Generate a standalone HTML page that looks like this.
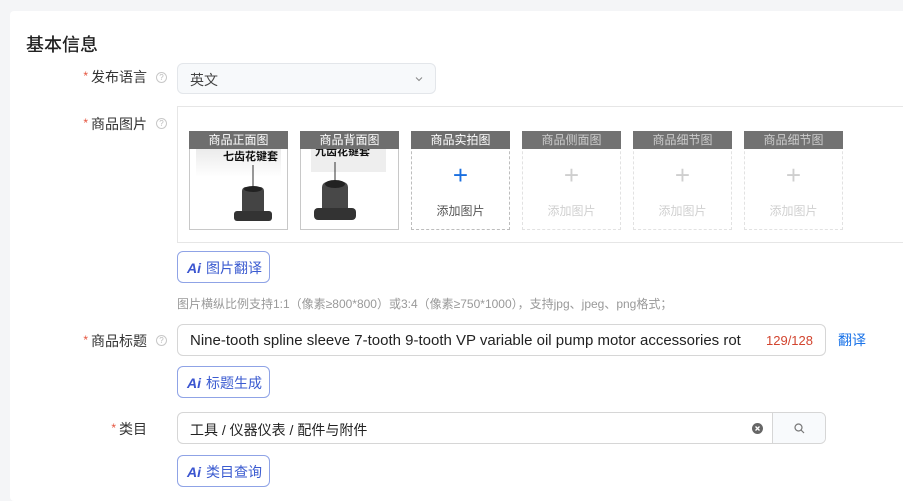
<!DOCTYPE html>
<html><head><meta charset="utf-8"><style>
*{box-sizing:border-box;margin:0;padding:0}
body{width:903px;height:492px;background:#f4f5f7;font-family:"Liberation Sans","Noto Sans CJK SC",sans-serif;position:relative;overflow:hidden;color:#333}
.card{position:absolute;left:10px;top:11px;width:900px;height:490px;background:#fff;border-radius:4px}
.abs{position:absolute}
.h{left:26px;top:31px;font-size:18px;color:#222;font-weight:500}
.lab{font-size:14px;color:#333;text-align:right;width:70px}
.lab b{color:#e5533d;font-weight:normal;font-size:12px;margin-right:3px;position:relative;top:-2px}
.q{width:11px;height:11px;border:1px solid #c8c8c8;border-radius:50%;font-size:8px;color:#bbb;text-align:center;line-height:9px}
.sel{left:177px;top:63px;width:259px;height:31px;border:1px solid #e3e6ea;border-radius:6px;background:#f7f9fb;font-size:14px;padding:6px 12px;color:#444}
.imgbox{left:177px;top:106px;width:740px;height:137px;border:1px solid #e6e6e6}
.tile{top:131px;width:99px;height:99px;border:1px dashed #bdbdbd}
.tile.p{border:1px solid #c8c8c8}
.tile.d{border-color:#e2e2e2}
.th{position:absolute;left:-1px;top:-1px;width:99px;height:18px;background:#6e6e6e;color:#fff;font-size:12px;text-align:center;line-height:18px;z-index:2}
.tile.d .th{background:#727272;color:#ccc}
.plus{position:absolute;left:0;width:100%;top:30px;text-align:center;font-size:26px;color:#1a6fe0;line-height:26px;font-weight:300}
.tile.d .plus{color:#cfcfcf}
.at{position:absolute;left:0;width:100%;top:70px;text-align:center;font-size:12px;color:#555}
.tile.d .at{color:#d0d0d0}
.ai{left:177px;width:93px;height:32px;border:1px solid #8fa3e6;border-radius:6px;font-size:14px;color:#3b5bd0;padding:6px 0 0 9px;background:#fff}
.ai i{font-style:italic;font-weight:bold;color:#3b55d0;margin-right:5px}
.hint{left:177px;top:295px;font-size:12px;color:#999}
.inp{left:177px;width:649px;height:32px;border:1px solid #d6d6d6;border-radius:6px;font-size:15px;padding:6px 12px;color:#222;white-space:nowrap;overflow:hidden}
</style></head><body>
<div class="card"></div>
<div class="abs h">基本信息</div>

<div class="abs lab" style="left:77px;top:67px"><b>*</b>发布语言</div>
<div class="abs q" style="left:156px;top:72px">?</div>
<div class="abs sel">英文<svg style="position:absolute;right:12px;top:12px" width="8" height="6"><path d="M1 1.5L4 4.5L7 1.5" fill="none" stroke="#888" stroke-width="1"/></svg></div>

<div class="abs lab" style="left:77px;top:114px"><b>*</b>商品图片</div>
<div class="abs q" style="left:156px;top:118px">?</div>
<div class="abs imgbox"></div>

<div class="abs tile p" style="left:189px"><div class="th">商品正面图</div>
<svg width="97" height="97" style="position:absolute;left:0;top:0"><defs><linearGradient id="g" x1="0" y1="0" x2="0" y2="1"><stop offset="0" stop-color="#e6e6e6"/><stop offset="1" stop-color="#fff"/></linearGradient></defs><rect x="6" y="10" width="85" height="35" fill="url(#g)"/><text x="33" y="28" font-size="11" font-weight="bold" fill="#111" font-family="Noto Sans CJK SC">七齿花键套</text><line x1="63" y1="33" x2="63" y2="58" stroke="#333"/><rect x="52" y="55" width="22" height="30" rx="4" fill="#444"/><ellipse cx="63" cy="57" rx="9" ry="3" fill="#222"/><rect x="44" y="79" width="38" height="10" rx="3" fill="#333"/></svg></div>
<div class="abs tile p" style="left:300px"><div class="th">商品背面图</div>
<svg width="97" height="97" style="position:absolute;left:0;top:0"><rect x="10" y="10" width="75" height="30" fill="#eee"/><text x="14" y="23" font-size="11" font-weight="bold" fill="#111" font-family="Noto Sans CJK SC">九齿花键套</text><line x1="34" y1="30" x2="34" y2="52" stroke="#333"/><rect x="21" y="50" width="26" height="32" rx="5" fill="#484848"/><ellipse cx="34" cy="52" rx="10" ry="4" fill="#222"/><rect x="13" y="76" width="42" height="12" rx="4" fill="#333"/></svg></div>
<div class="abs tile" style="left:411px"><div class="th">商品实拍图</div><div class="plus">+</div><div class="at">添加图片</div></div>
<div class="abs tile d" style="left:522px"><div class="th">商品侧面图</div><div class="plus">+</div><div class="at">添加图片</div></div>
<div class="abs tile d" style="left:633px"><div class="th">商品细节图</div><div class="plus">+</div><div class="at">添加图片</div></div>
<div class="abs tile d" style="left:744px"><div class="th">商品细节图</div><div class="plus">+</div><div class="at">添加图片</div></div>

<div class="abs ai" style="top:251px"><i>Ai</i>图片翻译</div>
<div class="abs hint">图片横纵比例支持1:1（像素≥800*800）或3:4（像素≥750*1000），支持jpg、jpeg、png格式；</div>

<div class="abs lab" style="left:77px;top:331px"><b>*</b>商品标题</div>
<div class="abs q" style="left:156px;top:335px">?</div>
<div class="abs inp" style="top:324px;padding-top:7px">Nine-tooth spline sleeve 7-tooth 9-tooth VP variable oil pump motor accessories rot<span style="position:absolute;left:584px;top:8px;font-size:13px;color:#d2452f;background:#fff;padding-left:4px">129/128</span></div>
<div class="abs" style="left:838px;top:330px;font-size:14px;color:#1a73e8">翻译</div>
<div class="abs ai" style="top:366px"><i>Ai</i>标题生成</div>

<div class="abs lab" style="left:77px;top:419px"><b>*</b>类目</div>
<div class="abs inp" style="top:412px;font-size:14px;padding-top:7px">工具 / 仪器仪表 / 配件与附件
<svg style="position:absolute;left:574px;top:10px" width="11" height="11"><circle cx="5.5" cy="5.5" r="5.5" fill="#666"/><path d="M3.5 3.5L7.5 7.5M7.5 3.5L3.5 7.5" stroke="#fff" stroke-width="1.3"/></svg>
<div style="position:absolute;left:594px;top:0;width:54px;height:30px;border-left:1px solid #d6d6d6;background:#f8fafc"><svg style="position:absolute;left:21px;top:10px" width="11" height="11"><circle cx="4.5" cy="4.5" r="3.5" fill="none" stroke="#777" stroke-width="1.2"/><path d="M7 7L10 10" stroke="#777" stroke-width="1.2"/></svg></div></div>
<div class="abs ai" style="top:455px"><i>Ai</i>类目查询</div>
</body></html>
